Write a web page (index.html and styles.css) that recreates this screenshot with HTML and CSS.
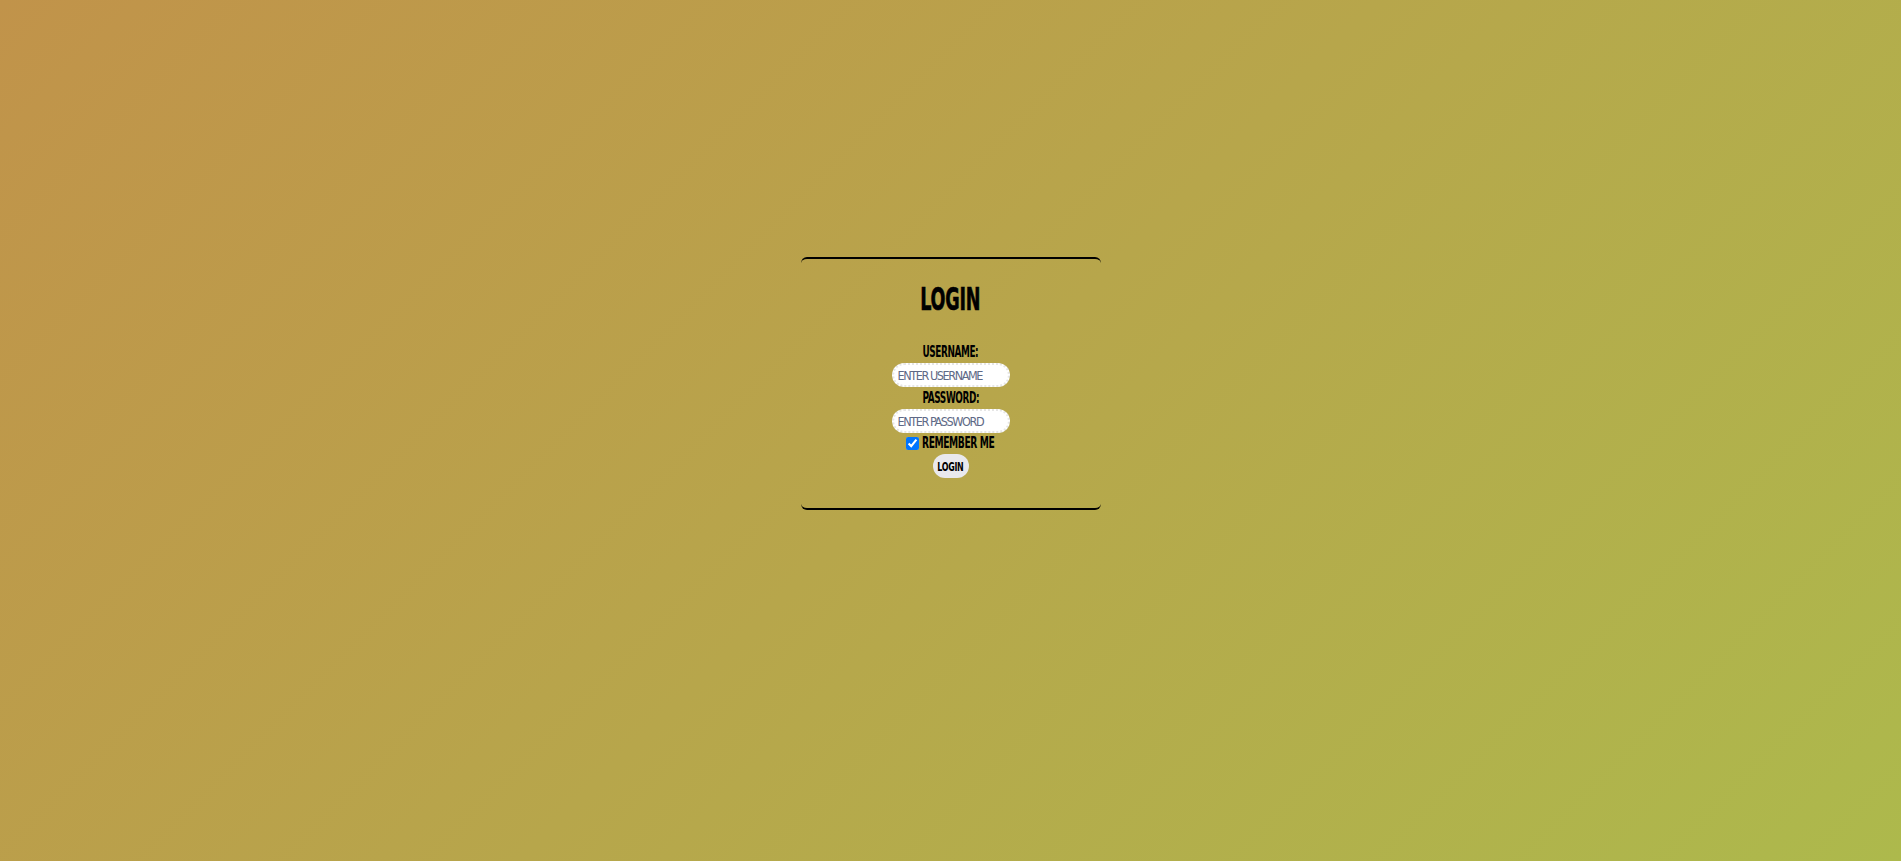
FILE: index.html
```html
<!DOCTYPE html>
<html lang="en">
<head>
<meta charset="utf-8">
<title>Login</title>
<link rel="stylesheet" href="styles.css">
</head>
<body>
<div class="login-box">
  <h1 class="title">LOGIN</h1>
  <form class="login-form">
    <label class="field-label" for="username">USERNAME:</label>
    <input class="field-input" id="username" type="text" placeholder="ENTER USERNAME">
    <label class="field-label" for="password">PASSWORD:</label>
    <input class="field-input" id="password" type="password" placeholder="ENTER PASSWORD">
    <div class="remember">
      <input class="remember-check" id="remember" type="checkbox" checked>
      <label class="remember-label" for="remember">REMEMBER ME</label>
    </div>
    <button class="login-btn" type="button"><span class="login-btn-text">LOGIN</span></button>
  </form>
</div>
</body>
</html>
```

FILE: styles.css
```css
html, body {
  margin: 0;
  height: 100%;
}
body {
  background: linear-gradient(135deg, #c1934a, #adb94c);
  font-family: "DejaVu Sans Condensed", "Liberation Sans", sans-serif;
  font-weight: bold;
  color: #000;
}
.login-box {
  width: 300px;
  box-sizing: border-box;
  margin: 257px auto 0;
  border-top: 2px solid #000;
  border-bottom: 2px solid #000;
  border-radius: 6px;
  padding: 23px 0 30px;
  display: flex;
  flex-direction: column;
  align-items: center;
}
.title {
  margin: 0 0 28px;
  font-size: 32px;
  line-height: 34px;
  letter-spacing: -0.3px;
  transform: scaleX(0.61);
  -webkit-text-stroke: 0.6px #000;
}
.login-form {
  display: flex;
  flex-direction: column;
  align-items: center;
}
.field-label {
  font-size: 15px;
  line-height: 17px;
  letter-spacing: -0.6px;
  transform: scaleX(0.66);
}
.field-input {
  width: 118px;
  height: 24px;
  box-sizing: border-box;
  margin: 2px 0 3px;
  border: 2px dotted #e6e6e6;
  border-radius: 12px;
  background: #fff;
  padding: 0 3px 0 4px;
  font-family: inherit;
  font-weight: normal;
  font-size: 12.5px;
  letter-spacing: -1.4px;
  outline: none;
}
.field-input::placeholder {
  color: #5e6986;
}
.remember {
  display: flex;
  align-items: center;
  gap: 3px;
  margin-top: -1px;
}
.remember-check {
  width: 13px;
  height: 13px;
  margin: 0;
}
.remember-label {
  font-size: 15px;
  line-height: 17px;
  letter-spacing: -0.6px;
  transform: scaleX(0.68);
  transform-origin: left center;
  margin-right: -33px;
}
.login-btn {
  margin-top: 2px;
  width: 36px;
  height: 24px;
  padding: 0;
  border: none;
  border-radius: 12px;
  background: #e9e9ed;
  font-family: inherit;
  font-weight: bold;
  font-size: 13px;
  color: #000;
  display: flex;
  align-items: center;
  justify-content: center;
}
.login-btn-text {
  display: inline-block;
  letter-spacing: -0.4px;
  transform: scaleX(0.68);
}
```
